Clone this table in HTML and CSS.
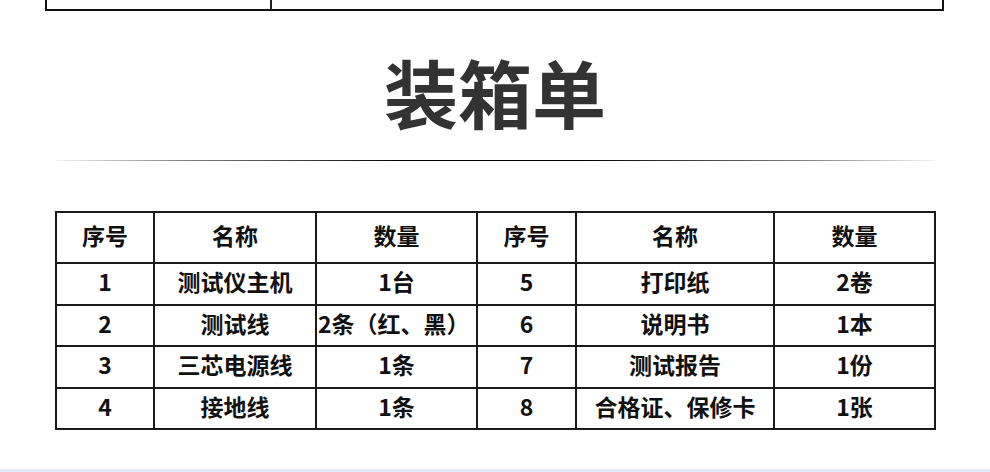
FILE: index.html
```html
<!DOCTYPE html>
<html lang="zh">
<head>
<meta charset="utf-8">
<link rel="stylesheet" href="styles.css">
</head>
<body>
<div class="top-table">
  <div class="top-cell left"></div>
  <div class="top-cell right"></div>
</div>
<h1 class="title">装箱单</h1>
<div class="rule"></div>
<table class="pack">
  <colgroup>
    <col class="c1"><col class="c2"><col class="c3"><col class="c4"><col class="c5"><col class="c6">
  </colgroup>
  <thead>
    <tr><th>序号</th><th>名称</th><th>数量</th><th>序号</th><th>名称</th><th>数量</th></tr>
  </thead>
  <tbody>
    <tr><td>1</td><td>测试仪主机</td><td>1台</td><td>5</td><td>打印纸</td><td>2卷</td></tr>
    <tr><td>2</td><td>测试线</td><td class="left">2条（红、黑）</td><td>6</td><td>说明书</td><td>1本</td></tr>
    <tr><td>3</td><td>三芯电源线</td><td>1条</td><td>7</td><td>测试报告</td><td>1份</td></tr>
    <tr><td>4</td><td>接地线</td><td>1条</td><td>8</td><td>合格证、保修卡</td><td>1张</td></tr>
  </tbody>
</table>
<div class="bottom-strip"></div>
</body>
</html>
```
FILE: styles.css
```css
html, body {
  margin: 0;
  padding: 0;
  background: #fff;
}
body {
  width: 990px;
  height: 472px;
  overflow: hidden;
  position: relative;
  font-family: "Noto Sans CJK SC", "Noto Sans", sans-serif;
  color: #111;
}
.top-table {
  display: flex;
  margin-left: 45px;
  width: 895px;
  height: 9px;
  border: 2px solid #111;
  border-top: none;
}
.top-cell.left {
  width: 223px;
  border-right: 2px solid #222;
}
.top-cell.right {
  flex: 1;
}
.title {
  margin: 35px 0 0 0;
  text-align: center;
  font-size: 74px;
  line-height: 90px;
  font-weight: 700;
  color: #333;
  letter-spacing: 0;
}
.rule {
  margin: 24px 0 0 55px;
  width: 880px;
  height: 1px;
  background: linear-gradient(to right, rgba(0,0,0,0.05) 0%, rgba(0,0,0,0.5) 15%, #000 40%, #000 60%, rgba(0,0,0,0.5) 85%, rgba(0,0,0,0.05) 100%);
}
.pack {
  margin: 50px 0 0 55px;
  width: 879px;
  border-collapse: collapse;
  table-layout: fixed;
  border: 2px solid #000;
}
.c1 { width: 98px; }
.c2 { width: 162px; }
.c3 { width: 161px; }
.c4 { width: 99px; }
.c5 { width: 198px; }
.c6 { width: 161px; }
.pack th, .pack td {
  border: 2px solid #1a1a1a;
  text-align: center;
  font-size: 23px;
  line-height: 28px;
  font-weight: 700;
  padding: 0 0 5px 0;
  color: #111;
  white-space: nowrap;
}
.pack th {
  height: 44px;
}
.pack td {
  height: 34.5px;
}
.pack td.left {
  text-align: left;
  padding-left: 1px;
}
.bottom-strip {
  position: absolute;
  left: 0;
  right: 0;
  top: 469px;
  height: 3px;
  background: #e1ebf5;
}
```
